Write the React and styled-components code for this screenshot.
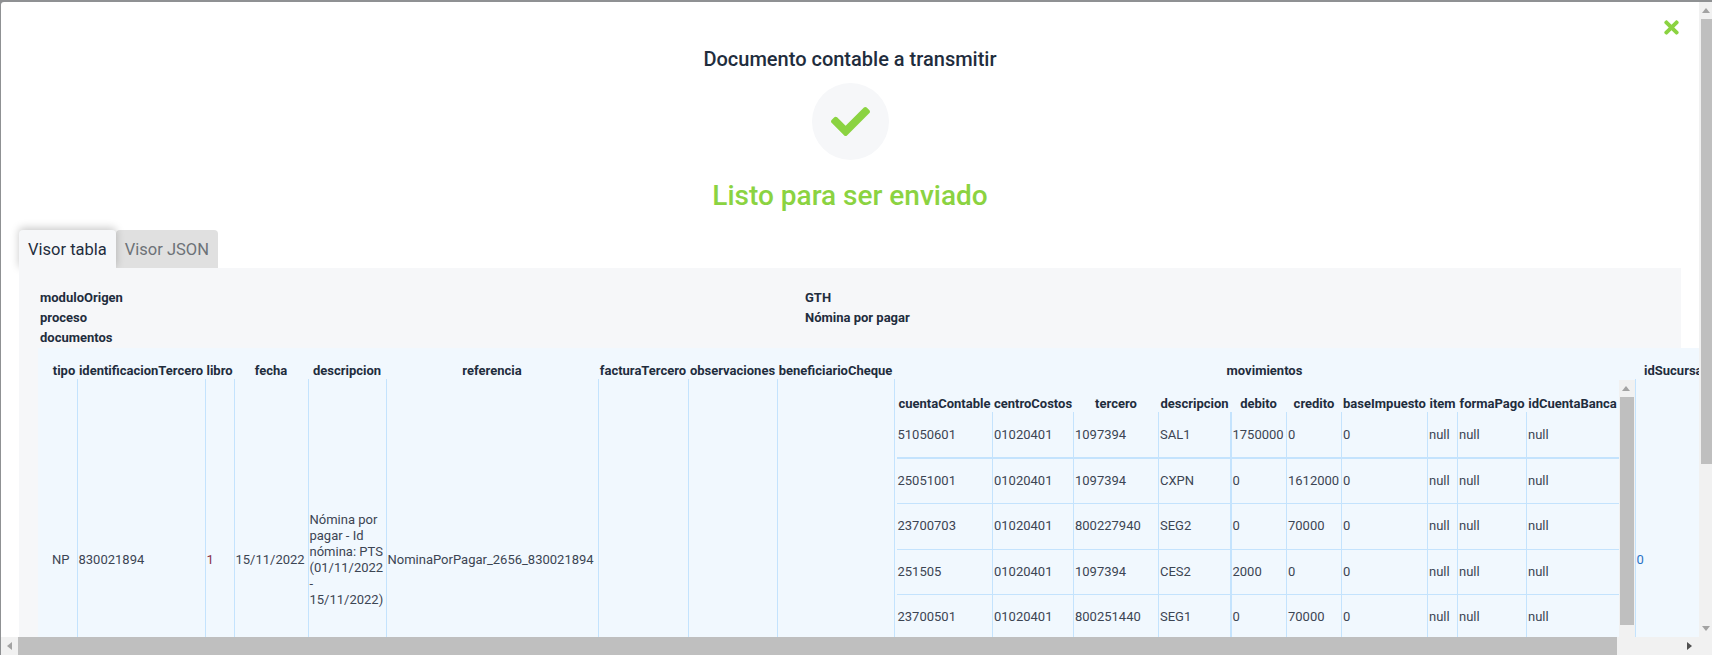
import styled, { createGlobalStyle } from "styled-components";
import { FaCheck, FaTimes } from "react-icons/fa";

const GlobalStyle = createGlobalStyle`
  html, body {
    margin: 0;
    height: 100%;
    overflow: hidden;
    background: #8f9193;
  }
  #root {
    height: 100%;
  }
  * {
    box-sizing: border-box;
  }
`;

const GREEN = "#8bd341";
const LINE = "#c4e3fd";

const outerCols = [26, 128, 29, 74, 78, 212, 90, 89, 117, 741, 80];
const innerCols = [96, 81, 85, 72, 56, 55, 86, 30, 69, 92];
const innerHead = ["cuentaContable", "centroCostos", "tercero", "descripcion", "debito", "credito", "baseImpuesto", "item", "formaPago", "idCuentaBanca"];

const movimientos = [
  { h: 46, heavy: true, cells: ["51050601", "01020401", "1097394", "SAL1", "1750000", "0", "0", "null", "null", "null"] },
  { h: 45, cells: ["25051001", "01020401", "1097394", "CXPN", "0", "1612000", "0", "null", "null", "null"] },
  { h: 46, cells: ["23700703", "01020401", "800227940", "SEG2", "0", "70000", "0", "null", "null", "null"] },
  { h: 45, cells: ["251505", "01020401", "1097394", "CES2", "2000", "0", "0", "null", "null", "null"] },
  { h: 46, cells: ["23700501", "01020401", "800251440", "SEG1", "0", "70000", "0", "null", "null", "null"] },
];

const Shell = styled.div`
  height: 100%;
  padding: 2px 0 0 1px;
`;

const Modal = styled.div`
  height: 100%;
  display: grid;
  grid-template-columns: 1fr 13px;
  grid-template-rows: 1fr 18px;
  background: #fff;
  border-radius: 3px 0 0 0;
  overflow: hidden;
  font-family: Roboto, "Liberation Sans", sans-serif;
  color: #1f2d3d;
`;

const Content = styled.div`
  position: relative;
  overflow: hidden;
  min-width: 0;
  min-height: 0;
`;

const CloseButton = styled.button`
  position: absolute;
  top: 15px;
  right: 17px;
  padding: 0;
  border: 0;
  background: none;
  color: ${GREEN};
  font-size: 21px;
  line-height: 1;
  display: flex;
`;

const Header = styled.header`
  display: flex;
  flex-direction: column;
  align-items: center;
  height: 228px;
  padding-top: 44px;
`;

const Title = styled.h2`
  margin: 0;
  font-size: 20px;
  line-height: 26px;
  font-weight: 500;
`;

const IconCircle = styled.div`
  width: 77px;
  height: 77px;
  margin-top: 11px;
  border-radius: 50%;
  background: #f6f7f9;
  color: ${GREEN};
  font-size: 39px;
  display: flex;
  align-items: center;
  justify-content: center;
`;

const Status = styled.h3`
  margin: 19px 0 0;
  font-size: 28px;
  line-height: 34px;
  font-weight: 500;
  color: ${GREEN};
`;

const Tabs = styled.div`
  display: flex;
  height: 38px;
  margin-left: 18px;
`;

const Tab = styled.div`
  height: 39px;
  padding: 0 9px;
  display: flex;
  align-items: center;
  font-size: 16.5px;
  border-radius: 4px 4px 0 0;
  background: ${({ $active }) => ($active ? "#f6f7f9" : "#e0e0e0")};
  color: ${({ $active }) => ($active ? "#1f2d3d" : "#6d7277")};
  box-shadow: ${({ $active }) => ($active ? "0 -2px 8px rgba(0, 0, 0, 0.22)" : "none")};
  position: relative;
  z-index: ${({ $active }) => ($active ? 1 : 0)};
`;

const Panel = styled.section`
  position: relative;
  z-index: 2;
  margin: 0 18px;
  padding: 20px 0 0 19px;
  background: #f6f7f9;
  min-height: 400px;
`;

const InfoGrid = styled.div`
  display: grid;
  grid-template-columns: 765px 1fr;
  margin-left: 2px;
  font-size: 13px;
  line-height: 20px;
  font-weight: 700;
  height: 60px;
`;

const TableArea = styled.div`
  width: 1700px;
  padding: 15px 0 0 13px;
  background: #f1f8fe;
  height: 400px;
`;

const Table = styled.table`
  border-collapse: collapse;
  table-layout: fixed;
  width: max-content;
  font-size: 13px;
  line-height: 16px;
`;

const Col = styled.col`
  width: ${({ $w }) => $w}px;
`;

const Head = styled.th`
  padding: 0 1px;
  height: 16px;
  font-weight: 700;
  text-align: center;
  white-space: nowrap;
  color: #1f2d3d;
`;

const Cell = styled.td`
  padding: 0 1px;
  height: 362px;
  color: ${({ $color }) => $color || "#3c4553"};
  border-right: 1px solid ${LINE};
  vertical-align: middle;
`;

const Wrap = styled.td`
  padding: 0;
  height: 362px;
  border-right: 1px solid ${LINE};
  vertical-align: top;
`;

const Nested = styled.div`
  display: flex;
  height: 362px;
  padding-left: 2px;
  border-left: 1px solid ${LINE};
  margin-left: -1px;
`;

const NestedBody = styled.div`
  padding-top: 17px;
  overflow: hidden;
`;

const InnerRow = styled.tr`
  height: ${({ $h }) => $h}px;
  border-bottom: ${({ $heavy }) => ($heavy ? 2 : 1)}px solid ${LINE};
`;

const InnerCell = styled.td`
  padding: 0 1px;
  color: #3c4553;
  white-space: nowrap;
  border-right: ${({ $thick }) => ($thick ? 2 : 1)}px solid ${LINE};
  &:last-child {
    border-right: 0;
  }
`;

const VBar = styled.div`
  display: flex;
  flex-direction: column;
  align-items: flex-end;
  background: #f1f1f1;
`;

const NestedBar = styled(VBar)`
  width: 16px;
  margin-top: 1px;
  flex: none;
  padding-right: 1px;
`;

const BarButton = styled.div`
  flex: none;
  width: 100%;
  height: ${({ $size }) => $size}px;
  display: flex;
  align-items: center;
  justify-content: center;
  color: #a3a3a3;
`;

const VThumb = styled.div`
  width: ${({ $w }) => $w}px;
  height: ${({ $h }) => $h}px;
  flex: none;
  background: #bfbfbf;
`;

const Spacer = styled.div`
  flex: 1;
`;

const HBar = styled.div`
  display: flex;
  align-items: stretch;
  background: #f1f1f1;
`;

const HButton = styled.div`
  flex: none;
  width: ${({ $w }) => $w}px;
  display: flex;
  align-items: center;
  justify-content: center;
  color: ${({ $dark }) => ($dark ? "#505050" : "#a3a3a3")};
`;

const HThumb = styled.div`
  width: 1599px;
  flex: none;
  background: #bfbfbf;
`;

const Corner = styled.div`
  background: #f1f1f1;
`;

const Arrow = ({ dir }) => {
  const points = {
    up: "4,1 8,6 0,6",
    down: "0,1 8,1 4,6",
    left: "6,0 6,8 1,4",
    right: "1,0 1,8 6,4",
  };
  return (
    <svg width="8" height="8" viewBox="0 0 8 8" fill="currentColor">
      <polygon points={points[dir]} />
    </svg>
  );
};

const App = () => {
  const heads = ["tipo", "identificacionTercero", "libro", "fecha", "descripcion", "referencia", "facturaTercero", "observaciones", "beneficiarioCheque", "movimientos", "idSucursal"];

  return (
    <>
      <GlobalStyle />
      <Shell>
        <Modal>
          <Content>
            <CloseButton aria-label="Cerrar">
              <FaTimes />
            </CloseButton>
            <Header>
              <Title>Documento contable a transmitir</Title>
              <IconCircle>
                <FaCheck />
              </IconCircle>
              <Status>Listo para ser enviado</Status>
            </Header>
            <Tabs>
              <Tab $active>Visor tabla</Tab>
              <Tab>Visor JSON</Tab>
            </Tabs>
            <Panel>
              <InfoGrid>
                <div>moduloOrigen</div>
                <div>GTH</div>
                <div>proceso</div>
                <div>Nómina por pagar</div>
                <div>documentos</div>
              </InfoGrid>
              <TableArea>
                <Table>
                  <colgroup>
                    {outerCols.map((w, i) => (
                      <Col key={i} $w={w} />
                    ))}
                  </colgroup>
                  <thead>
                    <tr>
                      {heads.map((h) => (
                        <Head key={h}>{h}</Head>
                      ))}
                    </tr>
                  </thead>
                  <tbody>
                    <tr>
                      <Cell>NP</Cell>
                      <Cell>830021894</Cell>
                      <Cell $color="#8a2f4a">1</Cell>
                      <Cell>15/11/2022</Cell>
                      <Cell>Nómina por pagar - Id nómina: PTS (01/11/2022 - 15/11/2022)</Cell>
                      <Cell>NominaPorPagar_2656_830021894</Cell>
                      <Cell />
                      <Cell />
                      <Cell />
                      <Wrap>
                        <Nested>
                          <NestedBody>
                            <Table>
                              <colgroup>
                                {innerCols.map((w, i) => (
                                  <Col key={i} $w={w} />
                                ))}
                              </colgroup>
                              <thead>
                                <tr>
                                  {innerHead.map((h) => (
                                    <Head key={h}>{h}</Head>
                                  ))}
                                </tr>
                              </thead>
                              <tbody>
                                {movimientos.map((row) => (
                                  <InnerRow key={row.cells[0]} $h={row.h} $heavy={row.heavy}>
                                    {row.cells.map((c, i) => (
                                      <InnerCell key={i} $thick={i === 3}>
                                        {c}
                                      </InnerCell>
                                    ))}
                                  </InnerRow>
                                ))}
                              </tbody>
                            </Table>
                          </NestedBody>
                          <NestedBar>
                            <BarButton $size={17}>
                              <Arrow dir="up" />
                            </BarButton>
                            <VThumb $w={14} $h={228} />
                            <Spacer />
                          </NestedBar>
                        </Nested>
                      </Wrap>
                      <Cell $color="#2a72c4">0</Cell>
                    </tr>
                  </tbody>
                </Table>
              </TableArea>
            </Panel>
          </Content>
          <VBar>
            <BarButton $size={17}>
              <Arrow dir="up" />
            </BarButton>
            <VThumb $w={11} $h={445} />
            <Spacer />
            <BarButton $size={17}>
              <Arrow dir="down" />
            </BarButton>
          </VBar>
          <HBar>
            <HButton $w={17}>
              <Arrow dir="left" />
            </HButton>
            <HThumb />
            <Spacer />
            <HButton $w={18} $dark>
              <Arrow dir="right" />
            </HButton>
          </HBar>
          <Corner />
        </Modal>
      </Shell>
    </>
  );
};

export default App;
